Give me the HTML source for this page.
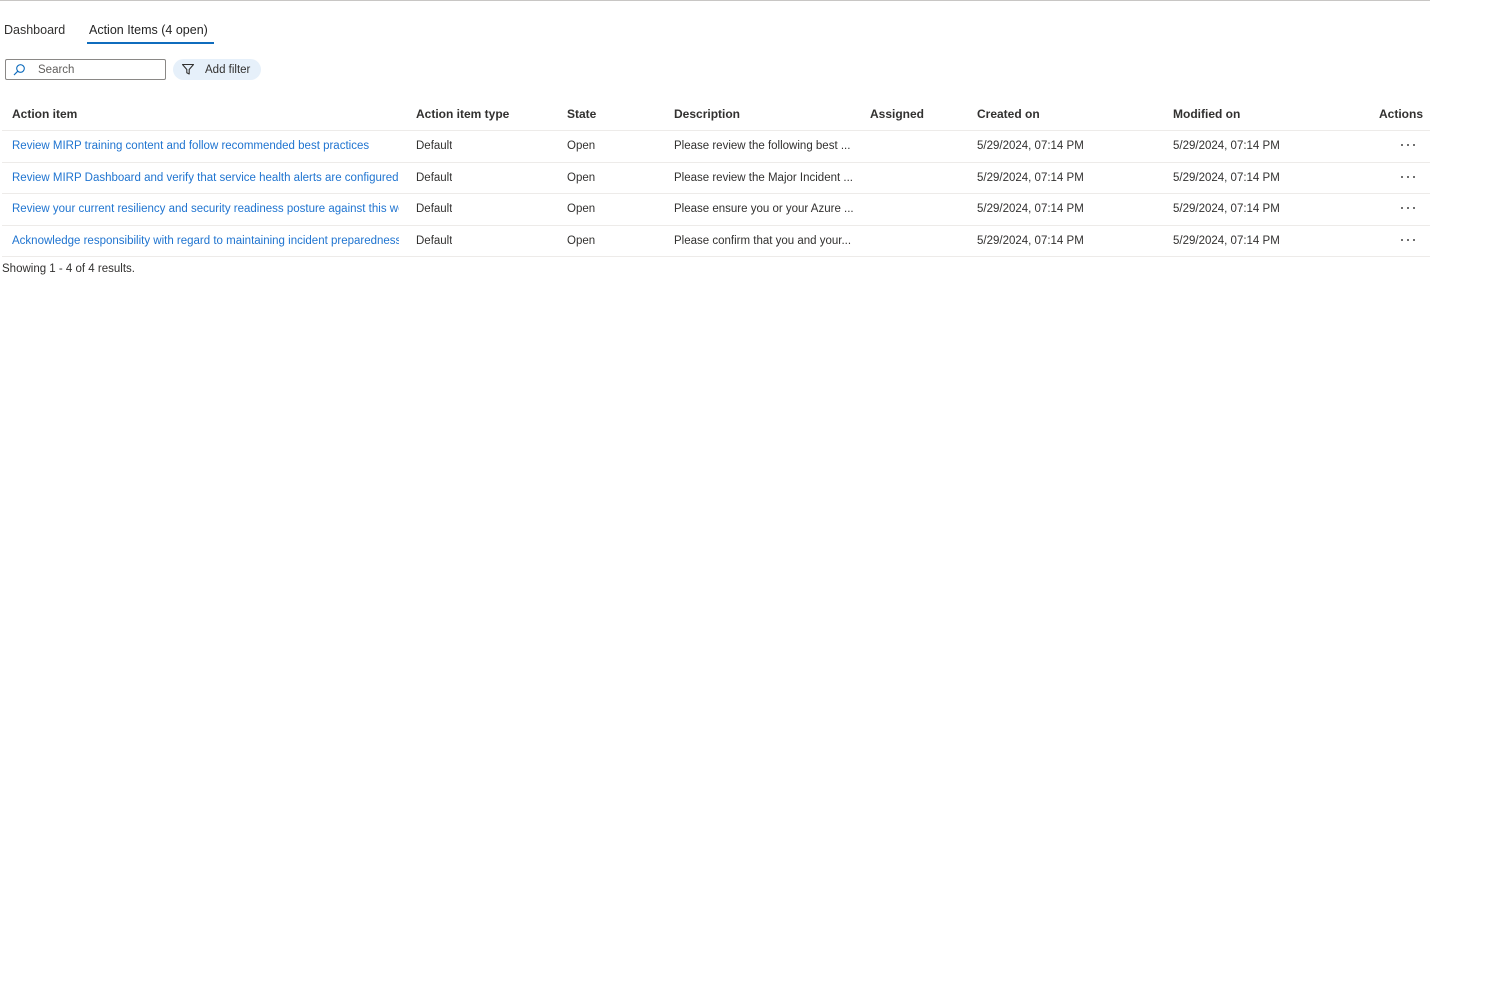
<!DOCTYPE html>
<html><head><meta charset="utf-8"><style>
*{margin:0;padding:0;box-sizing:border-box}
body{width:1497px;height:998px;background:#fff;font-family:"Liberation Sans",sans-serif;color:#323130;position:relative;overflow:hidden}
.a{position:absolute;white-space:nowrap}
.h{font-size:12px;font-weight:bold;color:#323130;top:107px}
.c{font-size:11.5px;overflow:hidden}
.l{color:#1f74d0}
.line{position:absolute;left:2px;width:1428px;height:1px;background:#edebe9}
.dots{position:absolute;width:16px;height:4px}
.dots i{position:absolute;top:0;width:2.2px;height:2.2px;border-radius:50%;background:#424242}
</style></head><body>
<div style="position:absolute;left:0;top:0;width:1430px;height:1px;background:#c8c6c4"></div>
<div class="a" style="left:4px;top:23px;font-size:12.5px">Dashboard</div>
<div class="a" style="left:89px;top:23px;font-size:12.5px;color:#242424">Action Items (4 open)</div>
<div style="position:absolute;left:87px;top:42px;width:127px;height:2px;background:#0f6cbd"></div>
<div style="position:absolute;left:5px;top:59px;width:161px;height:21px;border:1px solid #8a8886;border-radius:2px"></div>
<svg class="a" style="left:12px;top:63px" width="14" height="14" viewBox="0 0 14 14"><circle cx="8.5" cy="5.5" r="3.8" fill="none" stroke="#0f6cbd" stroke-width="1.1"/><path d="M5.8 8.2L2 12" stroke="#0f6cbd" stroke-width="1.2"/></svg>
<div class="a" style="left:38px;top:64px;font-size:11.5px;color:#605e5c">Search</div>
<div style="position:absolute;left:173px;top:59px;width:88px;height:21px;background:#e6f0fa;border-radius:11px"></div>
<svg class="a" style="left:181px;top:63px" width="14" height="13" viewBox="0 0 14 13"><path d="M1.5 1.5H12.5L8.2 6.5V11L5.8 9.8V6.5Z" fill="none" stroke="#323130" stroke-width="1.1" stroke-linejoin="round"/></svg>
<div class="a" style="left:205px;top:64px;font-size:11.5px">Add filter</div>

<div class="a h" style="left:12px">Action item</div>
<div class="a h" style="left:416px">Action item type</div>
<div class="a h" style="left:567px">State</div>
<div class="a h" style="left:674px">Description</div>
<div class="a h" style="left:870px">Assigned</div>
<div class="a h" style="left:977px">Created on</div>
<div class="a h" style="left:1173px">Modified on</div>
<div class="a h" style="left:1379px">Actions</div>

<div class="line" style="top:130px"></div>
<div class="line" style="top:162px"></div>
<div class="line" style="top:193px"></div>
<div class="line" style="top:225px"></div>
<div class="line" style="top:256px"></div>

<div class="a c l" style="left:12px;top:140px;width:388px">Review MIRP training content and follow recommended best practices</div>
<div class="a c l" style="left:12px;top:172px;width:388px">Review MIRP Dashboard and verify that service health alerts are configured</div>
<div class="a c l" style="left:12px;top:203px;width:387px">Review your current resiliency and security readiness posture against this workbook</div>
<div class="a c l" style="left:12px;top:235px;width:387px">Acknowledge responsibility with regard to maintaining incident preparedness</div>

<div class="a c" style="left:416px;top:140px">Default</div>
<div class="a c" style="left:416px;top:172px">Default</div>
<div class="a c" style="left:416px;top:203px">Default</div>
<div class="a c" style="left:416px;top:235px">Default</div>
<div class="a c" style="left:567px;top:140px">Open</div>
<div class="a c" style="left:567px;top:172px">Open</div>
<div class="a c" style="left:567px;top:203px">Open</div>
<div class="a c" style="left:567px;top:235px">Open</div>
<div class="a c" style="left:674px;top:140px">Please review the following best ...</div>
<div class="a c" style="left:674px;top:172px">Please review the Major Incident ...</div>
<div class="a c" style="left:674px;top:203px">Please ensure you or your Azure ...</div>
<div class="a c" style="left:674px;top:235px">Please confirm that you and your...</div>
<div class="a c" style="left:977px;top:140px">5/29/2024, 07:14 PM</div>
<div class="a c" style="left:977px;top:172px">5/29/2024, 07:14 PM</div>
<div class="a c" style="left:977px;top:203px">5/29/2024, 07:14 PM</div>
<div class="a c" style="left:977px;top:235px">5/29/2024, 07:14 PM</div>
<div class="a c" style="left:1173px;top:140px">5/29/2024, 07:14 PM</div>
<div class="a c" style="left:1173px;top:172px">5/29/2024, 07:14 PM</div>
<div class="a c" style="left:1173px;top:203px">5/29/2024, 07:14 PM</div>
<div class="a c" style="left:1173px;top:235px">5/29/2024, 07:14 PM</div>

<div class="dots" style="left:1401px;top:144px"><i style="left:0"></i><i style="left:6px"></i><i style="left:12px"></i></div>
<div class="dots" style="left:1401px;top:176px"><i style="left:0"></i><i style="left:6px"></i><i style="left:12px"></i></div>
<div class="dots" style="left:1401px;top:207px"><i style="left:0"></i><i style="left:6px"></i><i style="left:12px"></i></div>
<div class="dots" style="left:1401px;top:239px"><i style="left:0"></i><i style="left:6px"></i><i style="left:12px"></i></div>

<div class="a c" style="left:2px;top:263px">Showing 1 - 4 of 4 results.</div>
</body></html>
